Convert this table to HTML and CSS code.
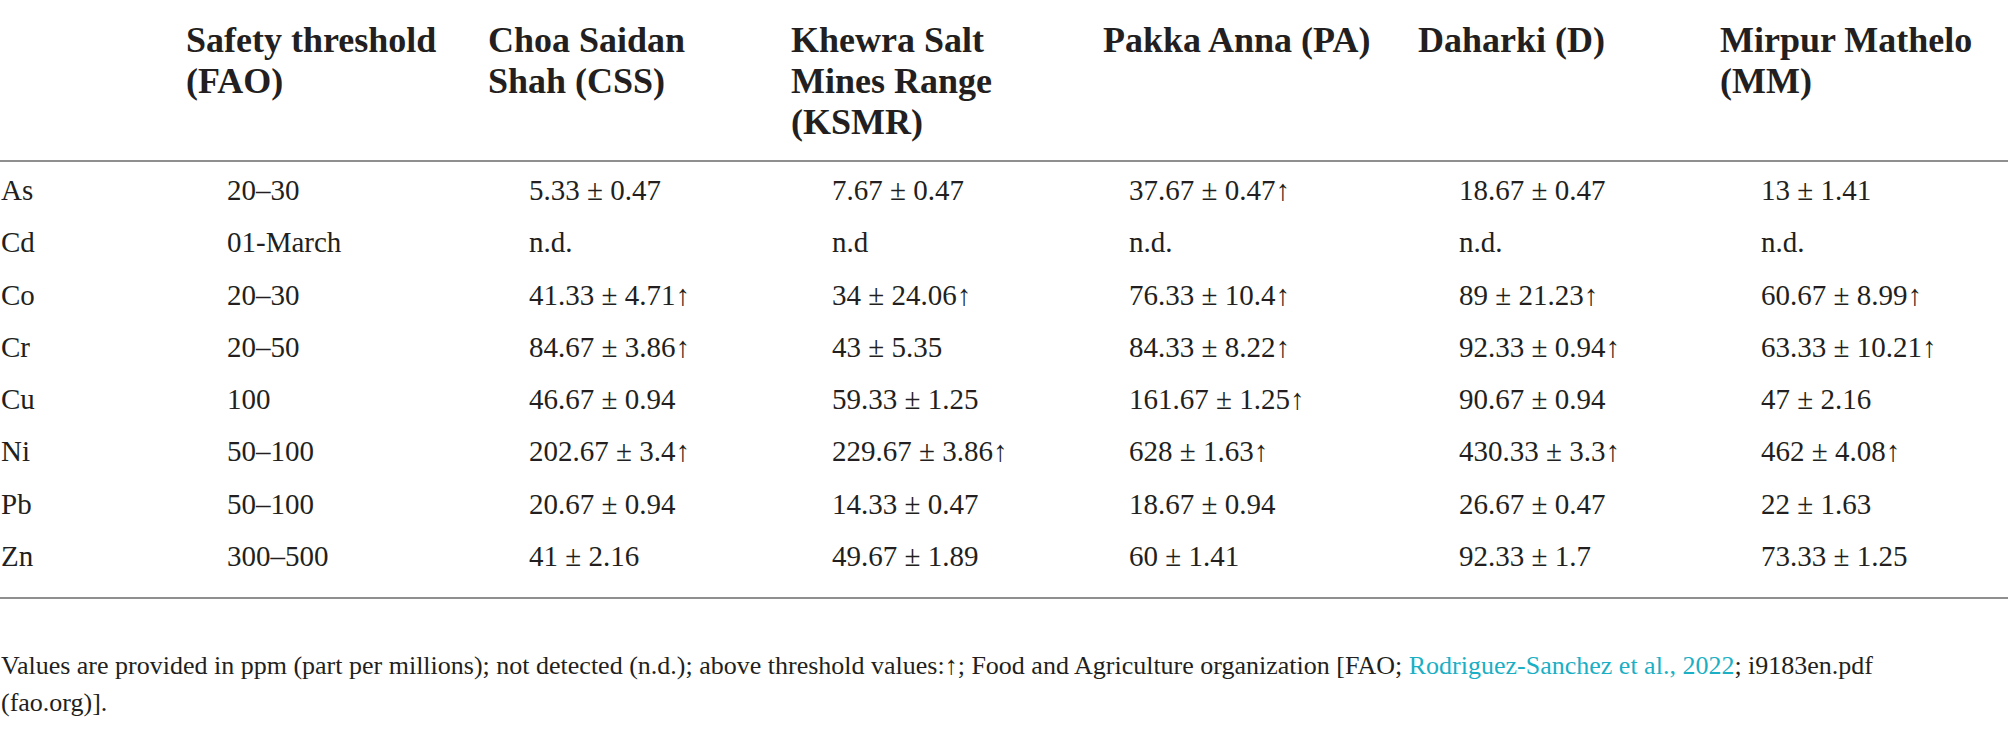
FILE: index.html
```html
<!DOCTYPE html>
<html lang="en">
<head>
<meta charset="utf-8">
<title>Heavy metal concentrations</title>
<link rel="stylesheet" href="styles.css">
</head>
<body>
<div class="page">
  <table class="data">
    <colgroup>
      <col class="c-label">
      <col class="c1">
      <col class="c2">
      <col class="c3">
      <col class="c4">
      <col class="c5">
      <col class="c6">
    </colgroup>
    <thead>
      <tr>
        <th class="label"></th>
        <th>Safety threshold (FAO)</th>
        <th>Choa Saidan Shah (CSS)</th>
        <th>Khewra Salt Mines Range (KSMR)</th>
        <th>Pakka Anna (PA)</th>
        <th>Daharki (D)</th>
        <th>Mirpur Mathelo (MM)</th>
      </tr>
    </thead>
    <tbody>
      <tr class="first"><td class="label">As</td><td>20–30</td><td>5.33 ± 0.47</td><td>7.67 ± 0.47</td><td class="pa">37.67 ± 0.47↑</td><td>18.67 ± 0.47</td><td>13 ± 1.41</td></tr>
      <tr><td class="label">Cd</td><td>01-March</td><td>n.d.</td><td>n.d</td><td class="pa">n.d.</td><td>n.d.</td><td>n.d.</td></tr>
      <tr><td class="label">Co</td><td>20–30</td><td>41.33 ± 4.71↑</td><td>34 ± 24.06↑</td><td class="pa">76.33 ± 10.4↑</td><td>89 ± 21.23↑</td><td>60.67 ± 8.99↑</td></tr>
      <tr><td class="label">Cr</td><td>20–50</td><td>84.67 ± 3.86↑</td><td>43 ± 5.35</td><td class="pa">84.33 ± 8.22↑</td><td>92.33 ± 0.94↑</td><td>63.33 ± 10.21↑</td></tr>
      <tr><td class="label">Cu</td><td>100</td><td>46.67 ± 0.94</td><td>59.33 ± 1.25</td><td class="pa">161.67 ± 1.25↑</td><td>90.67 ± 0.94</td><td>47 ± 2.16</td></tr>
      <tr><td class="label">Ni</td><td>50–100</td><td>202.67 ± 3.4↑</td><td>229.67 ± 3.86↑</td><td class="pa">628 ± 1.63↑</td><td>430.33 ± 3.3↑</td><td>462 ± 4.08↑</td></tr>
      <tr><td class="label">Pb</td><td>50–100</td><td>20.67 ± 0.94</td><td>14.33 ± 0.47</td><td class="pa">18.67 ± 0.94</td><td>26.67 ± 0.47</td><td>22 ± 1.63</td></tr>
      <tr class="last"><td class="label">Zn</td><td>300–500</td><td>41 ± 2.16</td><td>49.67 ± 1.89</td><td class="pa">60 ± 1.41</td><td>92.33 ± 1.7</td><td>73.33 ± 1.25</td></tr>
    </tbody>
  </table>
  <p class="note"><span>Values are provided in ppm (part per millions); not detected (n.d.); above threshold values:↑; Food and Agriculture organization [FAO; </span><a class="ref" href="#">Rodriguez-Sanchez et al., 2022</a><span>; i9183en.pdf</span> <span>(fao.org)].</span></p>
</div>
</body>
</html>
```

FILE: styles.css
```css
html, body {
  margin: 0;
  padding: 0;
  background: #ffffff;
}

.page {
  width: 2008px;
  color: #231f20;
  font-family: "Liberation Serif", "Times New Roman", serif;
}

.data {
  width: 2008px;
  table-layout: fixed;
  border-collapse: collapse;
  border-spacing: 0;
}

.c-label { width: 186px; }
.c1 { width: 302px; }
.c2 { width: 303px; }
.c3 { width: 312px; }
.c4 { width: 315px; }
.c5 { width: 302px; }
.c6 { width: 288px; }

.data th {
  font-size: 36px;
  line-height: 41px;
  font-weight: bold;
  text-align: left;
  vertical-align: top;
  padding: 20px 24px 17px 0;
  border-bottom: 2px solid #8f8f8f;
}

.data td {
  font-size: 29px;
  line-height: 46.3px;
  text-align: left;
  vertical-align: top;
  padding: 0 0 6px 41px;
  white-space: nowrap;
}

.data td.label {
  padding-left: 1px;
}

.data td.pa {
  padding-left: 26px;
}

.data tr.first td {
  padding-top: 5px;
}

.data tr.last td {
  padding-bottom: 18px;
  border-bottom: 2px solid #8f8f8f;
}

.note {
  margin: 48px 0 0 0;
  padding: 0 44px 0 1px;
  font-size: 26px;
  line-height: 37px;
}

.ref {
  color: #1aafc4;
  text-decoration: none;
}
```
